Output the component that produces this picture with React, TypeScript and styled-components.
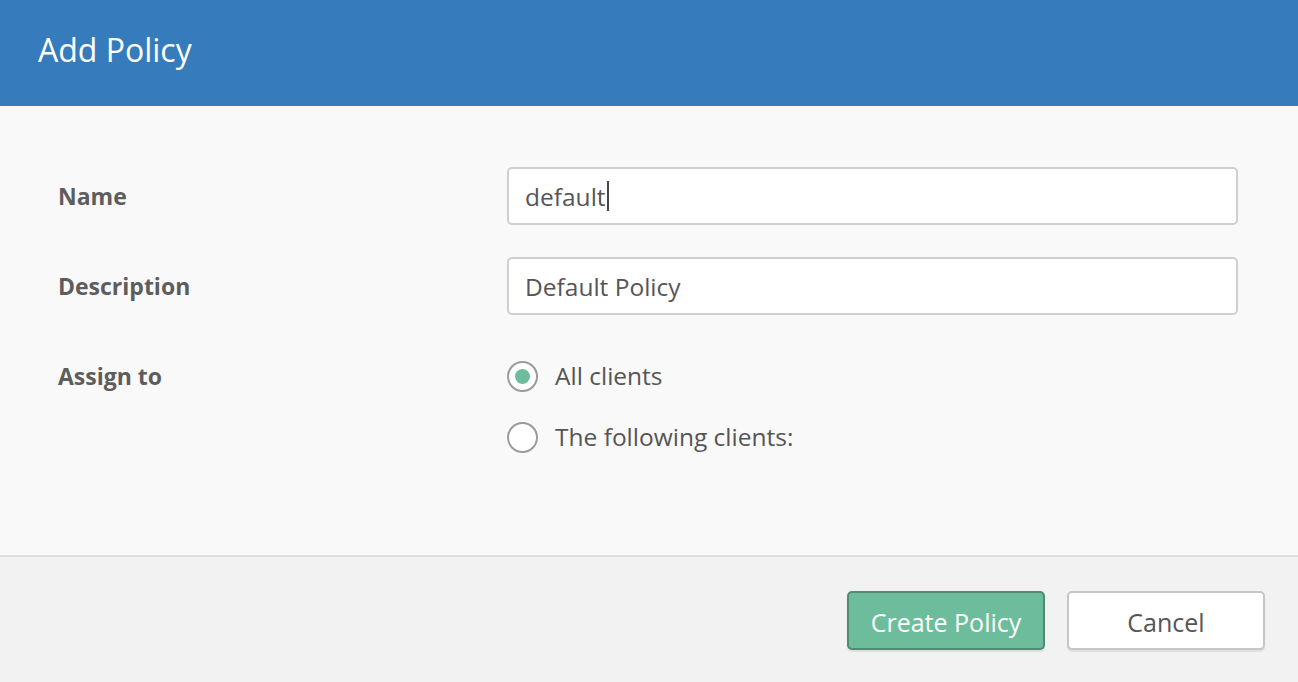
import React from 'react';
import styled, { createGlobalStyle } from 'styled-components';

const GlobalStyle = createGlobalStyle`
    html, body {
        margin: 0;
        padding: 0;
        background: #f2f2f2;
        font-family: 'Open Sans', Lato, 'Liberation Sans', sans-serif;
    }
`;

const Dialog = styled.div`
    display: flex;
    flex-direction: column;
    width: 1298px;
    height: 682px;
    overflow: hidden;
`;

const Header = styled.header`
    height: 106px;
    background: #367cbd;
    display: flex;
    align-items: center;
    padding: 0 38px;
    box-sizing: border-box;
`;

const Title = styled.h1`
    margin: 0 0 7px;
    font-size: 32px;
    font-weight: 400;
    color: #ffffff;
`;

const Body = styled.div`
    background: #f9f9f9;
    height: 451px;
    box-sizing: border-box;
    padding: 61px 60px 0 58px;
    border-bottom: 2px solid #dedede;
`;

const Form = styled.div`
    display: grid;
    grid-template-columns: 449px 1fr;
    row-gap: 32px;
    align-items: center;
`;

const Label = styled.label<{ $top?: boolean }>`
    font-size: 23px;
    font-weight: 700;
    color: #5d5d5d;
    line-height: 32px;
    align-self: ${p => (p.$top ? 'start' : 'center')};
    padding-top: ${p => (p.$top ? '13px' : '0')};
`;

const Input = styled.div`
    height: 58px;
    box-sizing: border-box;
    background: #ffffff;
    border: 2px solid #cfcfcf;
    border-radius: 5px;
    padding: 0 16px;
    display: flex;
    align-items: center;
    font-size: 24.5px;
    color: #555555;
`;

const Caret = styled.span`
    display: inline-block;
    width: 2px;
    height: 30px;
    background: #444;
    margin-left: 1px;
`;

const RadioGroup = styled.div`
    display: flex;
    flex-direction: column;
    gap: 29px;
    padding-top: 13px;
`;

const RadioRow = styled.div`
    display: flex;
    align-items: center;
    gap: 17px;
    font-size: 24.5px;
    color: #555555;
    line-height: 32px;
`;

const RadioCircle = styled.span<{ $checked?: boolean }>`
    width: 31px;
    height: 31px;
    box-sizing: border-box;
    border-radius: 50%;
    border: 2px solid #9a9a9a;
    background: #ffffff;
    display: flex;
    align-items: center;
    justify-content: center;

    &::after {
        content: '';
        width: 15px;
        height: 15px;
        border-radius: 50%;
        background: ${p => (p.$checked ? '#6dbd9c' : 'transparent')};
    }
`;

const Footer = styled.footer`
    flex: 1;
    background: #f2f2f2;
    display: flex;
    justify-content: flex-end;
    align-items: flex-start;
    gap: 22px;
    padding: 34px 33px 0 0;
`;

const Button = styled.button<{ $primary?: boolean }>`
    width: 198px;
    height: 59px;
    box-sizing: border-box;
    border-radius: 5px;
    padding: 3px 0 0;
    font-family: inherit;
    font-size: 25px;
    cursor: pointer;
    border: 2px solid ${p => (p.$primary ? '#4d8c72' : '#c6c6c6')};
    background: ${p => (p.$primary ? '#6dbd9c' : '#ffffff')};
    color: ${p => (p.$primary ? '#ffffff' : '#555555')};
    box-shadow: 0 2px 1px rgba(0, 0, 0, 0.08);
`;

export default function App() {
    return (
        <Dialog>
            <GlobalStyle />
            <Header>
                <Title>Add Policy</Title>
            </Header>
            <Body>
                <Form>
                    <Label>Name</Label>
                    <Input>
                        default
                        <Caret />
                    </Input>
                    <Label>Description</Label>
                    <Input>Default Policy</Input>
                    <Label $top>Assign to</Label>
                    <RadioGroup>
                        <RadioRow>
                            <RadioCircle $checked />
                            All clients
                        </RadioRow>
                        <RadioRow>
                            <RadioCircle />
                            The following clients:
                        </RadioRow>
                    </RadioGroup>
                </Form>
            </Body>
            <Footer>
                <Button $primary>Create Policy</Button>
                <Button>Cancel</Button>
            </Footer>
        </Dialog>
    );
}
